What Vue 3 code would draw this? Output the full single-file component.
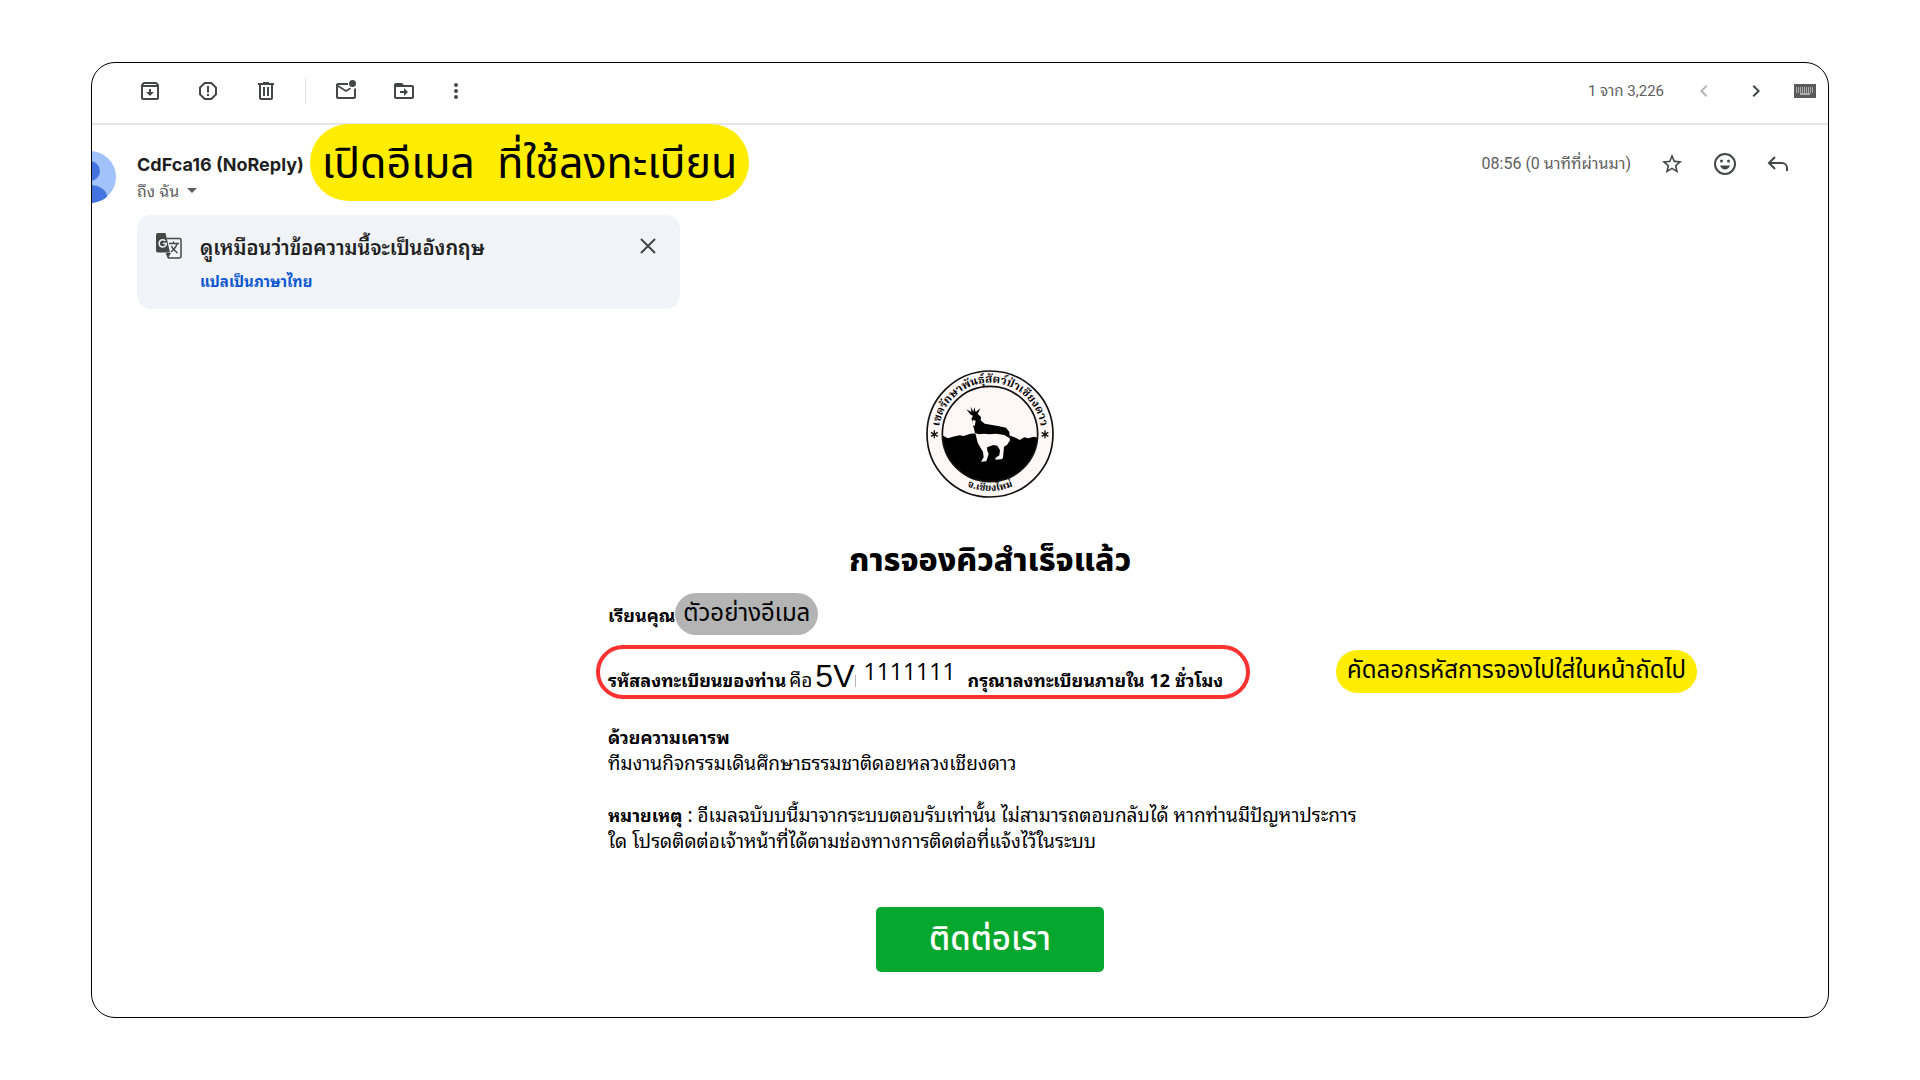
<script setup>
const notice = [
  'อีเมลฉบับบนี้มาจากระบบตอบรับเท่านั้น ไม่สามารถตอบกลับได้ หากท่านมีปัญหาประการ',
  'ใด โปรดติดต่อเจ้าหน้าที่ได้ตามช่องทางการติดต่อที่แจ้งไว้ในระบบ',
]
</script>

<template>
  <main class="mail">
    <header class="toolbar">
      <button class="icon archive" aria-label="เก็บ">
        <svg viewBox="0 0 24 24"><path d="M20.54 5.23l-1.39-1.68C18.88 3.21 18.47 3 18 3H6c-.47 0-.88.21-1.16.55L3.46 5.23C3.17 5.57 3 6.02 3 6.5V19c0 1.1.9 2 2 2h14c1.1 0 2-.9 2-2V6.5c0-.48-.17-.93-.46-1.27zM6.24 5h11.52l.83 1H5.42l.82-1zM5 19V8h14v11H5zm8-9h-2v3H8l4 4 4-4h-3z" /></svg>
      </button>
      <button class="icon spam" aria-label="รายงานจดหมายขยะ">
        <svg viewBox="0 0 24 24"><path d="M15.73 3H8.27L3 8.27v7.46L8.27 21h7.46L21 15.73V8.27L15.73 3zM19 14.9L14.9 19H9.1L5 14.9V9.1L9.1 5h5.8L19 9.1v5.8z" /><path d="M11 7h2v6.5h-2zM11 15h2v2h-2z" /></svg>
      </button>
      <button class="icon trash" aria-label="ลบ">
        <svg viewBox="0 0 24 24"><path d="M15 4V3H9v1H4v2h1v13c0 1.100.9 2 2 2h10c1.100 0 2-.9 2-2V6h1V4h-5zm2 15H7V6h10v13zM9 8h2v9H9zm4 0h2v9h-2z" /></svg>
      </button>
      <span class="rule"></span>
      <button class="icon unread" aria-label="ทำเครื่องหมายว่ายังไม่ได้อ่าน">
        <svg viewBox="0 0 24 24"><path d="M22 8.980V18c0 1.100-.9 2-2 2H4c-1.100 0-2-.9-2-2V6c0-1.100.9-2 2-2h10.100a5 5 0 0 0 0 2H4l8 5 3.670-2.290c.470.430 1.020.760 1.630.980L12 13 4 8v10h16V9.900a5 5 0 0 0 2-.92zM15 4.500a3.500 3.500 0 1 0 7 0 3.500 3.500 0 0 0-7 0z" /></svg>
      </button>
      <button class="icon move" aria-label="ย้ายไปที่">
        <svg viewBox="0 0 24 24"><path d="M20 6h-8l-2-2H4c-1.100 0-2 .9-2 2v12c0 1.100.9 2 2 2h16c1.100 0 2-.9 2-2V8c0-1.100-.9-2-2-2zm0 12H4V8h16v10zm-8-1l4-4-4-4v3H8v2h4z" /></svg>
      </button>
      <button class="icon more" aria-label="เพิ่มเติม">
        <svg viewBox="0 0 24 24"><path d="M12 8a2 2 0 1 0 0-4 2 2 0 0 0 0 4zm0 2a2 2 0 1 0 0 4 2 2 0 0 0 0-4zm0 6a2 2 0 1 0 0 4 2 2 0 0 0 0-4z" /></svg>
      </button>
      <span class="count">1 จาก 3,226</span>
      <button class="icon newer" aria-label="ใหม่กว่า" disabled>
        <svg viewBox="0 0 24 24"><path d="M15.410 7.410L14 6l-6 6 6 6 1.410-1.410L10.830 12z" /></svg>
      </button>
      <button class="icon older" aria-label="เก่ากว่า">
        <svg viewBox="0 0 24 24"><path d="M10 6L8.590 7.410 13.170 12l-4.580 4.590L10 18l6-6z" /></svg>
      </button>
      <button class="icon keyboard" aria-label="เครื่องมือป้อนข้อมูล">
        <svg viewBox="0 0 22 14">
          <path d="M0 0h22v14H0z" />
          <path d="M2 4h18M2 6h18M2 8h18" class="keys" />
          <path d="M6 10h10" class="space" />
        </svg>
      </button>
    </header>

    <section class="sender">
      <svg class="avatar" viewBox="0 0 52 52" aria-hidden="true">
        <clipPath id="face"><circle cx="26" cy="26" r="26" /></clipPath>
        <g clip-path="url(#face)">
          <path d="M0 0h52v52H0z" fill="#a1c2fa" />
          <circle cx="26" cy="20" r="10" fill="#4374e0" />
          <ellipse cx="26" cy="46" rx="17" ry="12" fill="#4374e0" />
        </g>
      </svg>
      <div class="from">
        <h2>CdFca16 (NoReply)</h2>
        <button class="to">ถึง ฉัน <i></i></button>
      </div>
      <mark class="step">เปิดอีเมล&nbsp; ที่ใช้ลงทะเบียน</mark>
      <div class="actions">
        <time>08:56 (0 นาทีที่ผ่านมา)</time>
        <button class="icon star" aria-label="ติดดาว">
          <svg viewBox="0 0 24 24"><path d="M22 9.240l-7.190-.62L12 2 9.190 8.630 2 9.240l5.460 4.730L5.820 21 12 17.270 18.180 21l-1.630-7.030L22 9.240zM12 15.400l-3.760 2.270 1-4.280-3.320-2.880 4.380-.38L12 6.100l1.710 4.040 4.380.38-3.320 2.880 1 4.280L12 15.400z" /></svg>
        </button>
        <button class="icon smile" aria-label="แสดงความรู้สึก">
          <svg viewBox="0 0 24 24"><circle cx="12" cy="12" r="10" fill="none" stroke="currentColor" stroke-width="2" /><circle cx="8.500" cy="9" r="1.500" /><circle cx="15.500" cy="9" r="1.500" /><path d="M7 13.500h10c-.7 2.300-2.600 4-5 4s-4.300-1.700-5-4z" /></svg>
        </button>
        <button class="icon reply" aria-label="ตอบ">
          <svg viewBox="0 0 24 24"><path d="M9 5L3 11l6 6M3.500 11H16a5 5 0 0 1 5 5v3" fill="none" stroke="currentColor" stroke-width="2" /></svg>
        </button>
      </div>
    </section>

    <aside class="translate">
      <svg class="glyph" viewBox="0 0 26 26" aria-hidden="true">
        <path d="M11 5.500h12.500a1.500 1.500 0 0 1 1.500 1.500v16.500a1.500 1.500 0 0 1-1.500 1.500H12.500l-2-5" fill="none" stroke="#444746" stroke-width="1.500" />
        <path d="M2 0h7.500l4.500 19.500H2a2 2 0 0 1-2-2V2a2 2 0 0 1 2-2z" fill="#444746" />
        <path d="M10 20h5l-3 5z" fill="#444746" />
        <path d="M9.300 7.900A3.600 3.600 0 1 0 10.300 10.600H6.900" fill="none" stroke="#f0f3f8" stroke-width="1.500" />
        <path d="M13 10.500h10M17.500 8.500v2M21 10.500c-.7 3.500-3 6-6 8.500M15.500 13c1 2.500 3 4.500 6 7" fill="none" stroke="#444746" stroke-width="1.400" />
      </svg>
      <div class="prompt">
        <strong>ดูเหมือนว่าข้อความนี้จะเป็นอังกฤษ</strong>
        <a href="#translate">แปลเป็นภาษาไทย</a>
      </div>
      <button class="icon close" aria-label="ปิด">
        <svg viewBox="0 0 16 16"><path d="M1 1l14 14M15 1L1 15" stroke="currentColor" stroke-width="2" /></svg>
      </button>
    </aside>

    <article class="letter">
      <svg class="seal" viewBox="49 31 384 384" role="img" aria-label="ตราเขตรักษาพันธุ์สัตว์ป่าเชียงดาว">
        <defs>
          <path id="arc-top" d="M87 223a154 154 0 0 1 308 0" />
          <path id="arc-low" d="M70 223a171 171 0 0 0 342 0" />
          <clipPath id="disc"><circle cx="241" cy="223" r="143" /></clipPath>
        </defs>
        <circle cx="241" cy="223" r="189" fill="#fdf7f8" stroke="#111" stroke-width="5" />
        <circle cx="241" cy="223" r="143" fill="#fdf7f8" />
        <g clip-path="url(#disc)">
          <path d="M95 226l20 10 15-5 20-4 12 2 20-7 20-1 96 6 20 7 12 7 14-8 12 3 16-5 16 4 14-12v150H95z" />
          <path d="M196 216l28 2 40-6 32 8 5 22-9 14-9 5-3 34-5 4-17 1-1-5 12-8 2-15-8-14-12-2-19 7 1 10 4 10-7 22-16 1 8-13-2-16-7-12-9-16z" fill="#fdf7f8" />
          <path d="M184 166l-14-17 15 8-2-16 8 15 3-13 4 14 14-11-8 17 10 9-1 10 12 10 40 7 24 5 10 13 1 19-16-10-24-4-22 2-16-2-14 2-12-4-6-24-1-12-4-6 5-10z" />
          <path d="M190 181l8 2-3 16-6-3z" fill="#fdf7f8" />
        </g>
        <circle cx="241" cy="223" r="143" fill="none" stroke="#111" stroke-width="5" />
        <g stroke="#111" stroke-width="4"><path d="M74 212v24M64 218l20 12M84 218l-20 12" /><path d="M406 212v24M396 218l20 12M416 218l-20 12" /></g>
        <text class="ring-top"><textPath href="#arc-top" startOffset="50%">เขตรักษาพันธุ์สัตว์ป่าเชียงดาว</textPath></text>
        <text class="ring-low"><textPath href="#arc-low" startOffset="50%">จ.เชียงใหม่</textPath></text>
      </svg>

      <h1>การจองคิวสำเร็จแล้ว</h1>

      <p class="dear"><b>เรียนคุณ</b><span class="alias">ตัวอย่างอีเมล</span></p>

      <div class="code-row">
        <p class="code">
          <b>รหัสลงทะเบียนของท่าน</b><span class="is">คือ</span>
          <span class="prefix">5V</span><span class="bar"></span>
          <span class="digits">1111111</span>
          <b>กรุณาลงทะเบียนภายใน 12 ชั่วโมง</b>
        </p>
        <mark class="hint">คัดลอกรหัสการจองไปใส่ในหน้าถัดไป</mark>
      </div>

      <p class="sign"><b>ด้วยความเคารพ</b><br />ทีมงานกิจกรรมเดินศึกษาธรรมชาติดอยหลวงเชียงดาว</p>
      <p class="note"><b>หมายเหตุ</b> : {{ notice[0] }}<br />{{ notice[1] }}</p>

      <button class="contact">ติดต่อเรา</button>
    </article>
  </main>
</template>

<style>
body {
  background: #fff;
}
</style>

<style scoped>
.mail {
  box-sizing: border-box;
  margin: 62px 91px;
  border: 1px solid #000;
  border-radius: 24px;
  overflow: hidden;
  background: #fff;
  color: #000;
  font-family: "Noto Sans Thai Looped", "Noto Sans Thai", "Noto Sans", sans-serif;
  font-size: 19px;
  line-height: 26px;
}
h1, h2, p {
  margin: 0;
}
b {
  font-size: 18px;
}
button {
  padding: 0;
  border: 0;
  background: none;
  font: inherit;
  color: inherit;
  cursor: pointer;
}
.icon {
  display: flex;
  flex: none;
  color: #444746;
}
.icon svg {
  width: 24px;
  height: 24px;
  fill: currentColor;
}
.toolbar {
  display: flex;
  align-items: center;
  box-sizing: border-box;
  height: 62px;
  padding: 0 12px 4px 46px;
  border-bottom: 2px solid #e6e6e6;
}
.spam, .trash, .move {
  margin-left: 34px;
}
.rule {
  width: 1px;
  height: 26px;
  margin: 0 28px 0 27px;
  background: #e2e2e2;
}
.more {
  margin-left: 28px;
}
.count {
  margin-left: auto;
  margin-right: 28px;
  font: 15px/24px Roboto, "Noto Sans Thai Looped", sans-serif;
  color: #5e5e5e;
}
.newer {
  color: #b5b7b6;
}
.older {
  margin-left: 28px;
}
.keyboard {
  margin-left: 26px;
  color: #5a5a5a;
}
.keyboard svg {
  width: 22px;
  height: 14px;
}
.keys {
  stroke: #fff;
  stroke-dasharray: 1 1;
}
.space {
  stroke: #fff;
}
.sender {
  display: flex;
  align-items: flex-start;
  height: 91px;
  margin-top: -1px;
}
.avatar {
  flex: none;
  width: 52px;
  height: 52px;
  margin: 27px 21px 0 -28px;
}
.from {
  flex: none;
  padding-top: 28px;
}
.from h2 {
  font: 700 18px/26px Inter, sans-serif;
  color: #1f1f1f;
}
.to {
  display: flex;
  align-items: center;
  gap: 8px;
  font-size: 16px;
  line-height: 24px;
  color: #5e5e5e;
}
.to i {
  border: 5px solid transparent;
  border-top-color: #5e5e5e;
  border-bottom: 0;
}
mark {
  border-radius: 40px;
  background: #ffed00;
  color: #000;
  white-space: nowrap;
}
.step, .hint, .alias, h1, .contact {
  font-family: "Noto Sans Thai", "Noto Sans", sans-serif;
}
.step {
  margin-left: 6px;
  padding: 4px 12px 0;
  font-size: 43px;
  line-height: 73px;
}
.actions {
  display: flex;
  align-items: center;
  margin-left: auto;
  margin-right: 38px;
  padding-top: 28px;
}
.actions time {
  font: 16px/24px Roboto, "Noto Sans Thai Looped", sans-serif;
  color: #5e5e5e;
}
.actions .icon {
  margin-left: 29px;
}
.translate {
  display: flex;
  box-sizing: border-box;
  width: 543px;
  height: 94px;
  margin-left: 45px;
  padding: 18px 24px 0 19px;
  border-radius: 14px;
  background: #f0f3f8;
}
.glyph {
  width: 26px;
  height: 26px;
  margin-right: 18px;
}
.prompt {
  display: flex;
  flex-direction: column;
  gap: 8px;
  flex: 1;
}
.prompt strong {
  font-weight: 600;
  font-size: 20px;
  color: #1f1f1f;
}
.prompt a {
  font-weight: 700;
  font-size: 15px;
  color: #0b57d0;
  text-decoration: none;
}
.close {
  align-self: flex-start;
  margin-top: 5px;
}
.close svg {
  width: 16px;
  height: 16px;
}
.letter {
  display: flex;
  flex-direction: column;
  width: 764px;
  margin: 61px auto 45px;
  padding-left: 60px;
}
.seal {
  align-self: center;
  width: 128px;
  height: 128px;
}
.seal text {
  font-family: "Noto Serif Thai", "Noto Sans Thai", serif;
  font-weight: 700;
  text-anchor: middle;
}
.ring-top {
  font-size: 34px;
}
.ring-low {
  font-size: 30px;
}
h1 {
  margin-top: 41px;
  text-align: center;
  font-size: 32px;
  line-height: 44px;
  font-weight: 800;
}
.dear {
  display: flex;
  align-items: center;
  margin-top: 10px;
}
.alias {
  padding: 0 8px;
  border-radius: 21px;
  background: #b4b4b4;
  font-size: 24px;
  line-height: 42px;
}
.code-row {
  position: relative;
  display: flex;
  margin: 10px 0 24px -12px;
}
.code {
  display: flex;
  align-items: baseline;
  box-sizing: border-box;
  width: 654px;
  height: 54px;
  padding: 7px 8px 0;
  border: 4px solid #ff3131;
  border-radius: 27px;
  white-space: nowrap;
}
.is {
  margin: 0 3px;
}
.prefix {
  font: 32px/40px "Liberation Sans", sans-serif;
}
.bar {
  width: 1px;
  height: 12px;
  background: #b4b4b4;
}
.digits {
  align-self: flex-start;
  margin: 2px 12px 0 8px;
  font: 23px/26px "Open Sans", sans-serif;
}
.hint {
  position: absolute;
  left: 740px;
  top: 5px;
  padding: 0 11px;
  font-size: 24px;
  line-height: 43px;
}
.note {
  margin-top: 26px;
  white-space: nowrap;
}
.contact {
  align-self: center;
  width: 228px;
  height: 65px;
  margin-top: 54px;
  border-radius: 5px;
  background: #05a72e;
  color: #fff;
  font-size: 33px;
  font-weight: 500;
}
</style>
